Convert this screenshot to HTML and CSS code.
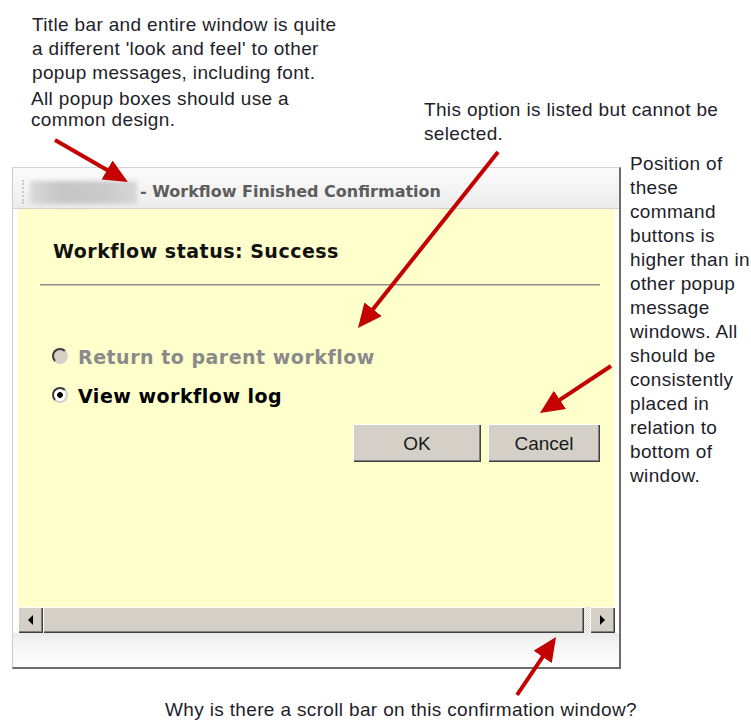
FILE: index.html
```html
<!DOCTYPE html>
<html lang="en">
<head>
<meta charset="utf-8">
<title>Workflow Finished Confirmation – review notes</title>
<link rel="stylesheet" href="styles.css">
</head>
<body>
<div class="sheet">
  <div class="window">
    <div class="titlebar">
      <span class="grip"></span>
      <span class="app-name"></span>
      <span class="title-text">- Workflow Finished Confirmation</span>
    </div>
    <div class="client">
      <div class="pane">
        <h1 class="status">Workflow status: Success</h1>
        <hr class="rule">
        <div class="options">
          <label class="option is-disabled"><span class="radio"></span>Return to parent workflow</label>
          <label class="option"><span class="radio is-checked"></span>View workflow log</label>
        </div>
        <div class="actions">
          <button class="btn btn-ok" type="button">OK</button>
          <button class="btn btn-cancel" type="button">Cancel</button>
        </div>
      </div>
      <div class="hscroll">
        <span class="sb-btn"><span class="tri tri-left"></span></span>
        <span class="sb-thumb"></span>
        <span class="sb-track"></span>
        <span class="sb-btn"><span class="tri tri-right"></span></span>
      </div>
    </div>
    <div class="statusbar"></div>
  </div>

  <p class="note note-look">Title bar and entire window is quite<br>a different 'look and feel' to other<br>popup messages, including font.</p>
  <p class="note note-common">All popup boxes should use a<br>common design.</p>
  <p class="note note-option">This option is listed but cannot be<br>selected.</p>
  <p class="note note-buttons">Position of<br>these<br>command<br>buttons is<br>higher than in<br>other popup<br>message<br>windows. All<br>should be<br>consistently<br>placed in<br>relation to<br>bottom of<br>window.</p>
  <p class="note note-scroll">Why is there a scroll bar on this confirmation window?</p>

  <svg class="arrows" width="751" height="722" viewBox="0 0 751 722">
    <defs>
      <marker id="head" markerUnits="userSpaceOnUse" markerWidth="24" markerHeight="22" viewBox="0 0 24 22" refX="8" refY="11" orient="auto">
        <path d="M0,0 L24,11 L0,22 Z" fill="#c40000"/>
      </marker>
    </defs>
    <g stroke="#c40000" stroke-width="4" marker-end="url(#head)">
      <line x1="55" y1="140" x2="114" y2="174"/>
      <line x1="498" y1="152" x2="368" y2="315.5"/>
      <line x1="611" y1="366" x2="553.3" y2="404.2"/>
      <line x1="517" y1="695" x2="547.1" y2="650.3"/>
    </g>
  </svg>
</div>
</body>
</html>
```

FILE: styles.css
```css
* { box-sizing: border-box; }

html, body {
  margin: 0;
  background: #fff;
}

.sheet {
  position: relative;
  width: 751px;
  height: 722px;
  overflow: hidden;
  padding: 167px 0 0 12px;
}

/* ---------- dialog window ---------- */
.window {
  width: 609px;
  height: 502px;
  display: flex;
  flex-direction: column;
  background: #fff;
  border-top: 1px solid #d2d2d2;
  border-left: 1px solid #cdcdcd;
  border-right: 2px solid #6c6c6c;
  border-bottom: 2px solid #6c6c6c;
}

.titlebar {
  height: 41px;
  flex: none;
  display: flex;
  align-items: center;
  padding: 8px 0 0 9px;
  background: linear-gradient(#fcfcfc, #ececec);
  border-bottom: 1px solid #d0d0d0;
}

.grip {
  width: 2px;
  height: 24px;
  border-left: 2px dotted #c8c8c8;
  margin-right: 6px;
}

.app-name {
  width: 107px;
  height: 23px;
  margin-right: 3px;
  border-radius: 3px;
  background: linear-gradient(90deg, #d8d8d8, #c6c6c6 30%, #cacaca 70%, #d6d6d6);
  filter: blur(2px);
}

.title-text {
  font: bold 16px/20px "DejaVu Sans", Verdana, sans-serif;
  color: #5c5c5c;
  white-space: nowrap;
}

.client {
  flex: none;
  display: flex;
  flex-direction: column;
  padding: 0 4px 0 5px;
  background: #fff;
}

.pane {
  height: 398px;
  background: #ffffcc;
  font: bold 19px/24px "DejaVu Sans", Verdana, sans-serif;
  letter-spacing: 0.5px;
  overflow: hidden;
}

.status {
  margin: 30px 0 0 35px;
  font: inherit;
  color: #111;
}

.rule {
  margin: 21px 15px 0 22px;
  height: 0;
  border: 0;
  border-top: 1px solid #8b8b8b;
  border-bottom: 1px solid #c6c6b6;
}

.options {
  margin-top: 59px;
  display: flex;
  flex-direction: column;
  gap: 15px;
}

.option {
  display: flex;
  align-items: flex-start;
  gap: 10px;
  padding-left: 34px;
  color: #000;
  white-space: nowrap;
}

.option.is-disabled { color: #8a8a8a; }

/* classic sunken radio: dark upper-left arc, light lower-right arc */
.radio {
  flex: none;
  width: 16px;
  height: 16px;
  margin-top: 3px;
  border-radius: 50%;
  border: 2px solid;
  border-color: #3c3c3c #d4d0c8 #d4d0c8 #3c3c3c;
  background: #d4d0c8;
}

.radio.is-checked {
  background: radial-gradient(circle, #000 0 2.6px, #fff 3.1px);
}

.actions {
  margin-top: 16px;
  padding-right: 15px;
  display: flex;
  justify-content: flex-end;
  gap: 7px;
}

.btn {
  height: 38px;
  padding: 0;
  border: 0;
  background: #d4d0c8;
  font: 19px/1 "Liberation Sans", Arial, sans-serif;
  color: #1a1a1a;
  box-shadow: inset 1px 1px #fff, inset -1px -1px #404040, inset -2px -2px #808080;
}

.btn-ok { width: 128px; }
.btn-cancel { width: 112px; }

/* ---------- horizontal scrollbar ---------- */
.hscroll {
  height: 26px;
  display: flex;
}

.sb-btn,
.sb-thumb {
  background: #d4d0c8;
  box-shadow: inset 1px 1px #fff, inset -1px -1px #404040, inset -2px -2px #808080;
}

.sb-btn {
  flex: none;
  width: 25px;
  display: flex;
  align-items: center;
  justify-content: center;
}

.sb-thumb { flex: 1; }

.sb-track {
  flex: none;
  width: 6px;
  background-color: #fff;
  background-image: repeating-conic-gradient(#d4d0c8 0 25%, #fff 0 50%);
  background-size: 2px 2px;
}

.tri {
  width: 0;
  height: 0;
  border-top: 5px solid transparent;
  border-bottom: 5px solid transparent;
}

.tri-left { border-right: 5px solid #000; }
.tri-right { border-left: 5px solid #000; }

.statusbar {
  flex: 1;
  background: linear-gradient(#ebebeb, #f6f6f6 40%, #fdfdfd);
}

/* ---------- review notes ---------- */
.note {
  position: absolute;
  margin: 0;
  font: 19px/24px "Liberation Sans", Arial, sans-serif;
  letter-spacing: 0.35px;
  color: #1e1e2a;
  white-space: nowrap;
}

.note-look    { left: 32px;  top: 13px; }
.note-common  { left: 31px;  top: 88px; line-height: 21px; }
.note-option  { left: 424px; top: 98px; }
.note-buttons { left: 630px; top: 152px; }
.note-scroll  { left: 165px; top: 698px; }

.arrows {
  position: absolute;
  left: 0;
  top: 0;
  pointer-events: none;
}
```
